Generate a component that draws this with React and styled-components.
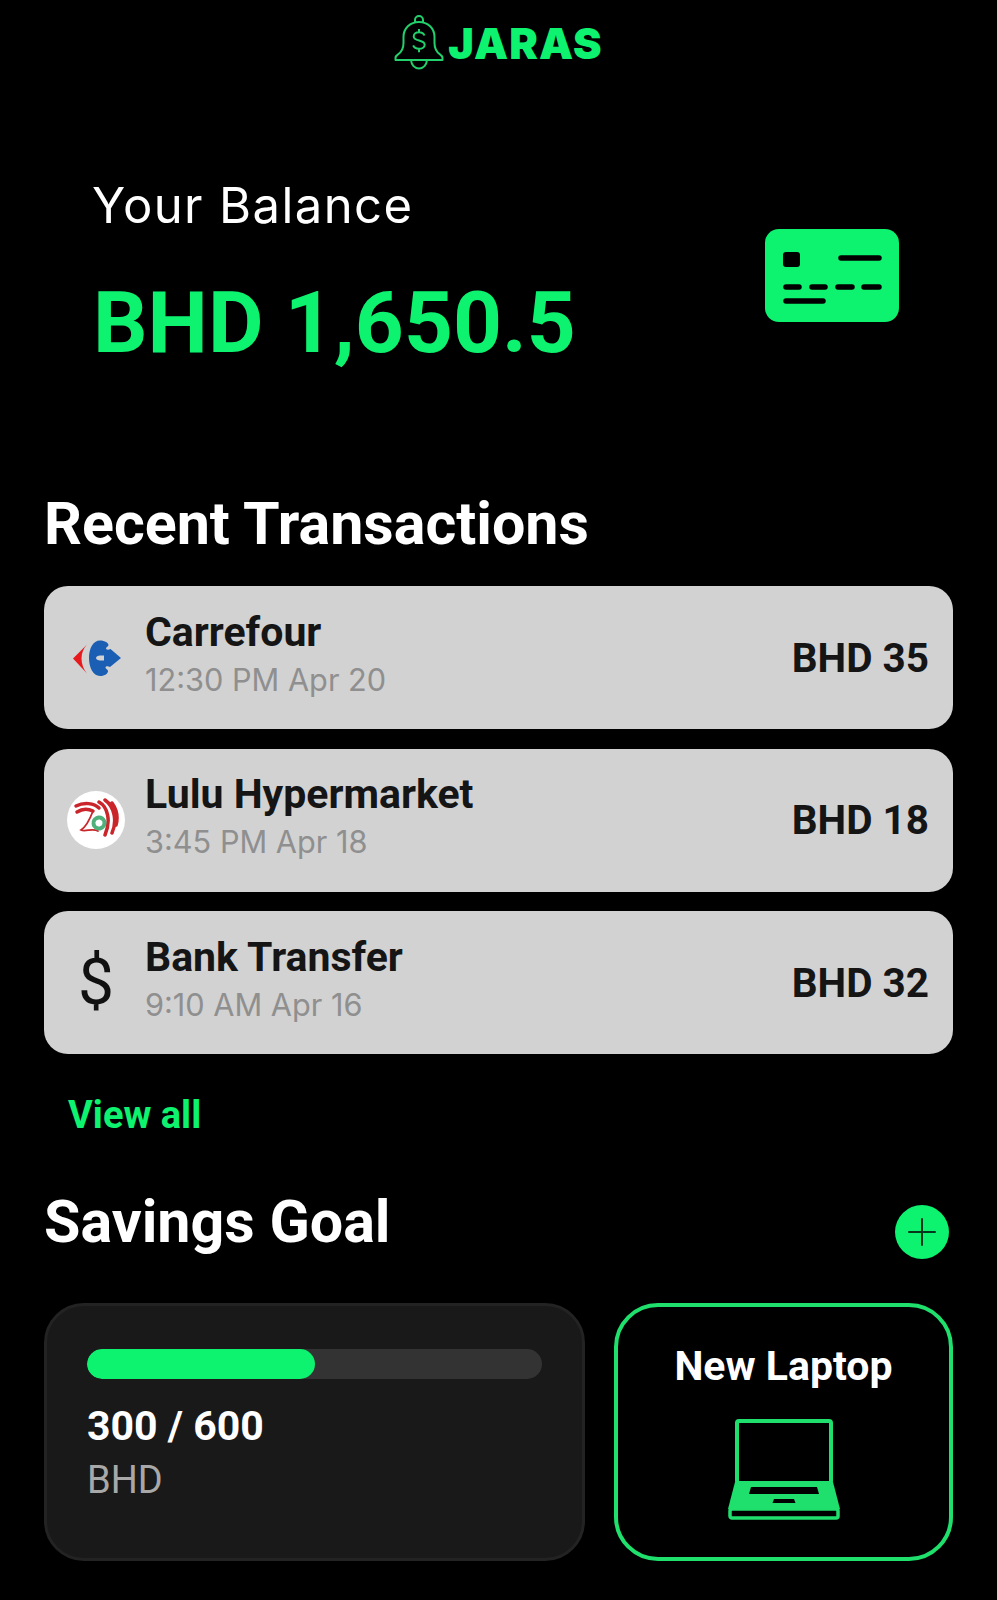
import React from "react";
import styled, { createGlobalStyle } from "styled-components";

const GREEN = "#0df26f";

const GlobalStyle = createGlobalStyle`
  html, body {
    margin: 0;
    padding: 0;
    background: #000;
  }
  * {
    box-sizing: border-box;
  }
`;

const Page = styled.div`
  width: 997px;
  height: 1600px;
  padding: 0 44px;
  background: #000;
  overflow: hidden;
  font-family: Roboto, "Liberation Sans", sans-serif;
`;

const Header = styled.header`
  display: flex;
  justify-content: center;
  align-items: center;
  gap: 4px;
  height: 86px;
`;

const LogoText = styled.span`
  font-family: Inter, sans-serif;
  font-weight: 900;
  font-size: 43px;
  letter-spacing: 1px;
  line-height: 1;
  color: ${GREEN};
`;

const BalanceRow = styled.section`
  display: flex;
  justify-content: space-between;
  align-items: center;
  padding: 93px 54px 0 48px;
`;

const BalanceLabel = styled.div`
  font-family: Inter, sans-serif;
  font-size: 49px;
  letter-spacing: 1.4px;
  line-height: 54px;
  color: #fff;
`;

const BalanceValue = styled.div`
  margin: 41px 0 0 1px;
  font-weight: 700;
  font-size: 85.5px;
  line-height: 98px;
  color: ${GREEN};
`;

const SectionTitle = styled.h2`
  margin: 0;
  font-weight: 700;
  font-size: 59.2px;
  line-height: 66px;
  color: #fff;
`;

const RecentTitle = styled(SectionTitle)`
  margin-top: 119px;
`;

const TxList = styled.div`
  display: flex;
  flex-direction: column;
  gap: 19.5px;
  margin-top: 29px;
`;

const TxCard = styled.div`
  display: flex;
  align-items: center;
  height: 143px;
  padding: 0 24px 0 22px;
  background: #d2d2d2;
  border-radius: 24px;
`;

const TxIcon = styled.div`
  display: flex;
  justify-content: center;
  align-items: center;
  flex: none;
  width: 60px;
  margin-right: 19px;
  color: #111;
`;

const LogoCircle = styled.div`
  display: flex;
  justify-content: center;
  align-items: center;
  width: 58px;
  height: 58px;
  background: #fff;
  border-radius: 50%;
`;

const DollarGlyph = styled.span`
  font-size: 64px;
  line-height: 1;
  color: #111;
`;

const TxInfo = styled.div`
  flex: 1;
  padding-bottom: 6px;
`;

const TxName = styled.div`
  font-weight: 700;
  font-size: 41px;
  line-height: 48px;
  color: #151515;
`;

const TxTime = styled.div`
  font-family: Inter, sans-serif;
  font-size: 30.7px;
  line-height: 44px;
  margin-top: 2px;
  color: #8f8f8f;
`;

const TxAmount = styled.div`
  font-weight: 700;
  font-size: 40.5px;
  color: #151515;
`;

const ViewAll = styled.a`
  display: block;
  margin: 40px 0 0 24px;
  font-weight: 700;
  font-size: 38px;
  line-height: 42px;
  color: ${GREEN};
`;

const GoalHeader = styled.div`
  display: flex;
  justify-content: space-between;
  align-items: flex-start;
  margin-top: 53px;
`;

const AddButton = styled.button`
  display: flex;
  justify-content: center;
  align-items: center;
  width: 54px;
  height: 54px;
  margin: 16px 4px 0 0;
  padding: 0;
  border: none;
  border-radius: 50%;
  background: ${GREEN};
`;

const GoalRow = styled.div`
  display: flex;
  justify-content: space-between;
  margin-top: 44px;
`;

const ProgressCard = styled.div`
  width: 541px;
  height: 258px;
  padding: 43px 40px;
  background: #191919;
  border: 3px solid #232323;
  border-radius: 40px;
`;

const Track = styled.div`
  height: 30px;
  background: #333;
  border-radius: 15px;
  overflow: hidden;
`;

const Fill = styled.div`
  height: 100%;
  background: ${GREEN};
  border-radius: 15px;
`;

const GoalAmount = styled.div`
  margin-top: 24px;
  font-weight: 700;
  font-size: 41px;
  line-height: 47px;
  color: #fff;
`;

const GoalUnit = styled.div`
  margin-top: 10px;
  font-size: 38px;
  line-height: 41px;
  color: #a8a8a8;
`;

const LaptopCard = styled.div`
  display: flex;
  flex-direction: column;
  align-items: center;
  width: 339px;
  height: 258px;
  padding-top: 38px;
  border: 4px solid #1fe06c;
  border-radius: 44px;
`;

const LaptopName = styled.div`
  margin-bottom: 31px;
  font-weight: 700;
  font-size: 41px;
  line-height: 43px;
  color: #fff;
`;

const BellLogo = () => (
  <svg width="50" height="56" viewBox="0 0 50 56" fill="none" stroke="#22d06c" strokeWidth="2" strokeLinejoin="round">
    <path d="M21 7.500V5a4 4 0 0 1 8 0v2.500" />
    <path d="M1.500 43c0-1.500 1-2.600 2.500-3.600C8 36.600 9.500 33 9.500 28v-6C9.500 13.500 16 7 25 7s15.500 6.500 15.500 15v6c0 5 1.500 8.600 5.500 11.400 1.500 1 2.500 2.100 2.500 3.600v2H1.500z" />
    <path d="M17 45c.4 5 3.700 8.500 8 8.500s7.600-3.500 8-8.500" />
    <path d="M30.500 20.500c-.8-2-2.800-3.200-5.500-3.200-3 0-5.300 1.600-5.300 4.100 0 5.400 11 2.600 11 8.300 0 2.500-2.500 4.100-5.700 4.100-2.800 0-5-1.300-5.800-3.400M25 14v3.300M25 34v3.300" />
  </svg>
);

const CardIcon = () => (
  <svg width="134" height="93" viewBox="0 0 134 93">
    <rect width="134" height="93" rx="14" fill={GREEN} />
    <rect x="18" y="23" width="17" height="15" rx="3" fill="#000" />
    <g stroke="#000" strokeWidth="5.500" strokeLinecap="round">
      <path d="M76 29h38M21 58h13M47 58h13M73 58h14M99 58h15M21 72h37" />
    </g>
  </svg>
);

const CarrefourLogo = () => (
  <svg width="50" height="36" viewBox="0 0 50 36">
    <path d="M16 4.500 2 18.500l14 15c-3.500-4-5.500-9.500-5.500-15S12.500 8.500 16 4.500z" fill="#e8191c" />
    <path d="M29 0.500c-7 0-11 8-11 17.500s4 18 11 18c5 0 8-2.500 8-5 0-1.500-2.500-2-2.500-3.500 0-1 1.500-1.500 3-1l1.500.5L50 18 39.500 9l-1.500.5c-1.500.5-3 0-3-1 0-1.500 2.500-2 2.500-3.500C37.500 3 34 .5 29 .5z" fill="#1a5fb4" />
    <path d="M25 18c0-1.500 2-2.500 4-2.500h4v5h-4c-2 0-4-1-4-2.500z" fill="#d2d2d2" />
  </svg>
);

const LuluLogo = () => (
  <svg width="46" height="46" viewBox="0 0 46 46" fill="none" strokeLinecap="round">
    <path d="M3 9c8-4 18-3 23 2M4 15c6-4 12-3 16-1" stroke="#c9252b" strokeWidth="3.500" />
    <path d="M26 5c9 5 12 19 6 33M32 3c10 7 12 22 7 33M39 6c5 7 6 15 4 22" stroke="#c9252b" strokeWidth="3.500" />
    <path d="M20 14c-3 8-6 15-12 19 4 2 12-2 17 1" stroke="#c9252b" strokeWidth="1.800" />
    <circle cx="26" cy="26" r="5.500" stroke="#4fb07c" strokeWidth="4" strokeDasharray="3 1.500" />
  </svg>
);

const PlusIcon = () => (
  <svg width="28" height="28" viewBox="0 0 28 28" stroke="#06371c" strokeWidth="2" strokeLinecap="round">
    <path d="M14 1v26M1 14h26" />
  </svg>
);

const LaptopIcon = () => (
  <svg width="112" height="101" viewBox="0 0 112 101" fill="none">
    <rect x="9" y="2" width="94" height="62" rx="2" stroke="#1fe06c" strokeWidth="4" />
    <path d="M7 63h98l7 27H0z" fill="#1fe06c" />
    <path d="M23 68h66l2 7H21zM46 80h20l1.500 4H44.500z" fill="#000" />
    <rect x="2" y="90" width="108" height="9" rx="2" stroke="#1fe06c" strokeWidth="3.500" />
  </svg>
);

const transactions = [
  { name: "Carrefour", time: "12:30 PM Apr 20", amount: "BHD 35", icon: <CarrefourLogo /> },
  {
    name: "Lulu Hypermarket",
    time: "3:45 PM Apr 18",
    amount: "BHD 18",
    icon: (
      <LogoCircle>
        <LuluLogo />
      </LogoCircle>
    ),
  },
  {
    name: "Bank Transfer",
    time: "9:10 AM Apr 16",
    amount: "BHD 32",
    icon: <DollarGlyph>$</DollarGlyph>,
  },
];

const App = () => {
  return (
    <Page>
      <GlobalStyle />
      <Header>
        <BellLogo />
        <LogoText>JARAS</LogoText>
      </Header>

      <BalanceRow>
        <div>
          <BalanceLabel>Your Balance</BalanceLabel>
          <BalanceValue>BHD 1,650.5</BalanceValue>
        </div>
        <CardIcon />
      </BalanceRow>

      <RecentTitle>Recent Transactions</RecentTitle>
      <TxList>
        {transactions.map((tx) => (
          <TxCard key={tx.name}>
            <TxIcon>{tx.icon}</TxIcon>
            <TxInfo>
              <TxName>{tx.name}</TxName>
              <TxTime>{tx.time}</TxTime>
            </TxInfo>
            <TxAmount>{tx.amount}</TxAmount>
          </TxCard>
        ))}
      </TxList>
      <ViewAll>View all</ViewAll>

      <GoalHeader>
        <SectionTitle>Savings Goal</SectionTitle>
        <AddButton>
          <PlusIcon />
        </AddButton>
      </GoalHeader>

      <GoalRow>
        <ProgressCard>
          <Track>
            <Fill style={{ width: `${(300 / 600) * 100}%` }} />
          </Track>
          <GoalAmount>300 / 600</GoalAmount>
          <GoalUnit>BHD</GoalUnit>
        </ProgressCard>
        <LaptopCard>
          <LaptopName>New Laptop</LaptopName>
          <LaptopIcon />
        </LaptopCard>
      </GoalRow>
    </Page>
  );
};

export default App;
